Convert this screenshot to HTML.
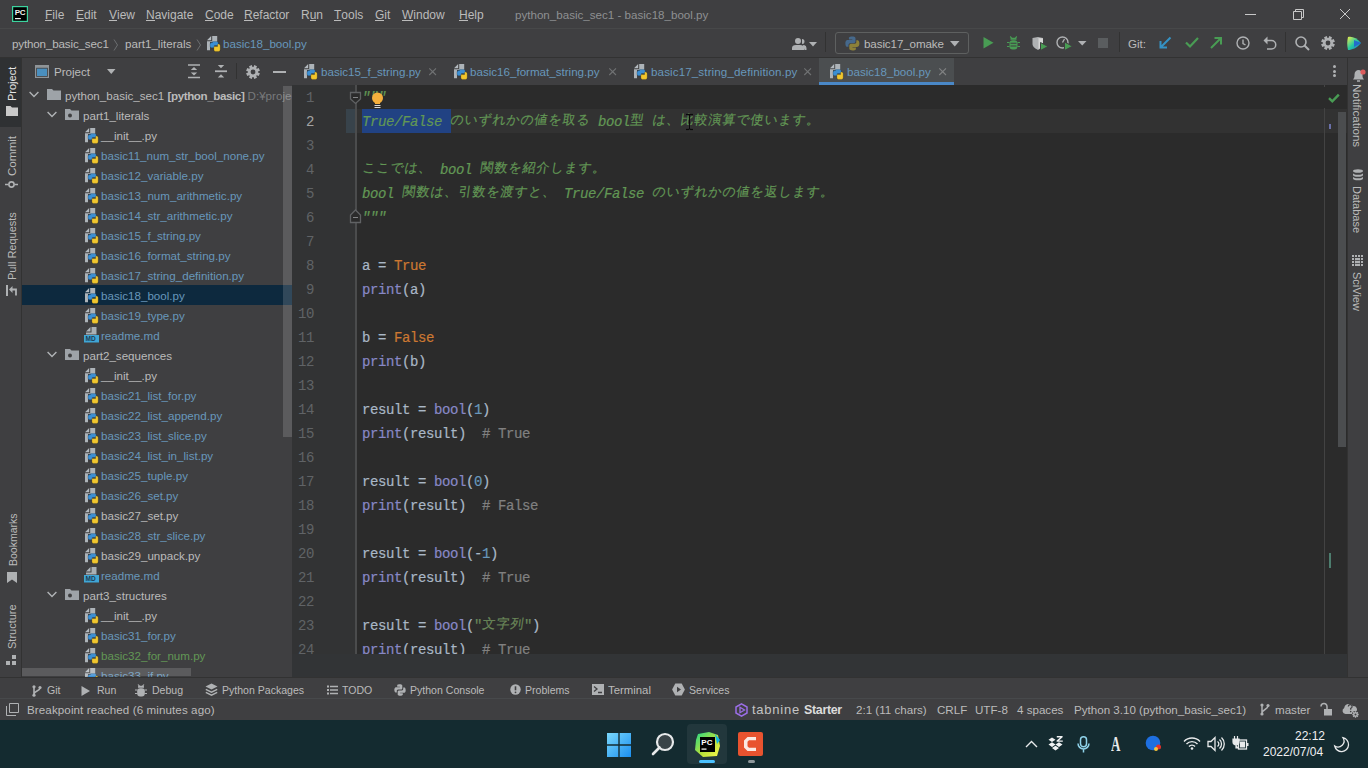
<!DOCTYPE html>
<html><head><meta charset="utf-8">
<style>
*{margin:0;padding:0;box-sizing:border-box}
html,body{width:1368px;height:768px;overflow:hidden;background:#3f3f41;font-family:"Liberation Sans",sans-serif;font-size:11.6px;color:#bbbbbb}
.a{position:absolute;white-space:nowrap}
svg{position:absolute;overflow:visible}
u{text-decoration:none;border-bottom:1px solid #bbbbbb;display:inline-block;line-height:10px}
#title{left:0;top:0;width:1368px;height:28px;background:#3f3f41}
#nav{left:0;top:28px;width:1368px;height:29px;background:#3f3f41}
#lstrip{left:0;top:57px;width:21px;height:620px;background:#3f3f41}
#proj{left:22px;top:57px;width:270px;height:620px;background:#3f3f41;overflow:hidden}
#tabs{left:292px;top:57px;width:1055px;height:28px;background:#3f3f41}
#editor{left:292px;top:85px;width:1055px;height:592px;background:#2b2b2b;overflow:hidden}
#rstrip{left:1347px;top:57px;width:21px;height:620px;background:#3f3f41}
#btool{left:0;top:677px;width:1368px;height:22px;background:#3f3f41}
#status{left:0;top:699px;width:1368px;height:21px;background:#3f3f41}
#taskbar{left:0;top:720px;width:1368px;height:48px;background:#142b30}
.vl{transform:rotate(-90deg);transform-origin:0 0;font-size:11px;line-height:14px;color:#bbbbbb}
.vt{transform:rotate(90deg);transform-origin:0 0;font-size:11px;line-height:14px}
.ln{position:absolute;left:0;width:22px;text-align:right;font-family:"Liberation Mono",monospace;font-size:14px;letter-spacing:-0.4px;line-height:24px;padding-top:1px}
.cl{position:absolute;left:70px;-webkit-text-stroke:0.2px;font-family:"Liberation Mono",monospace;font-size:14px;letter-spacing:-0.4px;line-height:24px;color:#a9b7c6;white-space:pre;padding-top:1px}
.doc{color:#629755;font-style:italic}
.jp{display:inline-block;white-space:nowrap;overflow:visible;font-size:13px;letter-spacing:1px;position:relative;top:-2px;font-style:normal;transform:skewX(-8deg)}
.menu span{position:absolute;top:8px;font-size:12px;line-height:14px;color:#bbbbbb}
.row{position:absolute;height:20px;line-height:20px;left:0;width:270px}
.row .t{position:absolute;top:1px}
.blue{color:#6897bb}.green{color:#629755}.wh{color:#bbbbbb}
.code{font-family:"Liberation Mono",monospace;font-size:13.33px;line-height:24px;color:#a9b7c6}
</style></head><body>
<svg width="0" height="0" style="position:absolute">
 <defs>
  <g id="py">
   <path d="M0 4.2 L4.2 0 V4.2 Z" fill="#b4bac0"/>
   <path d="M5.2 0 H10.2 V6 H3 V14.2 H0 V5.2 H5.2 Z" fill="#adb3b8"/>
   <path d="M5.5 5.6 H9.8 A1.6 1.6 0 0 1 11.4 7.2 V9.6 H7.4 V11.8 H4.6 A1.6 1.6 0 0 1 3 10.2 V8.2 A1.6 1.6 0 0 1 4.6 6.6 H5.5 Z" fill="#3b8fd4" stroke="rgba(0,0,0,0.3)" stroke-width="0.6"/>
   <path d="M8.6 15.4 H11.6 A1.6 1.6 0 0 0 13.2 13.8 V9.6 A1.6 1.6 0 0 0 11.6 8 H10.6 V10.6 H6.9 V13.8 A1.6 1.6 0 0 0 8.6 15.4 Z" fill="#f0c62e" stroke="rgba(0,0,0,0.3)" stroke-width="0.6"/>
  </g>
  <g id="md"><path d="M2 4.5 L6.5 0 L6.5 4.5 Z" fill="#aeb5ba"/><path d="M7.5 0 H12.5 V7.5 H2 V5.5 H7.5 Z" fill="#a9b0b5"/><rect x="0" y="8" width="15" height="7.5" fill="#40a6d6"/><text x="1.6" y="14.3" font-family="Liberation Sans" font-weight="bold" font-size="6.5" fill="#1d3d55">MD</text></g>
  <g id="fold"><path d="M0 1 h5 l1.5 1.5 h7.5 v9.5 h-14 z" fill="#9ea3a8"/></g>
  <g id="chev"><path d="M0.6 1 L5 5.4 L9.4 1" stroke="#b0b3b6" stroke-width="1.4" fill="none"/></g>
 </defs>
</svg>

<!-- TITLE BAR -->
<div class="a" id="title">
 <svg style="left:12px;top:6px" width="16" height="16"><rect x="0.6" y="0.6" width="14.8" height="14.8" fill="#000" stroke="#3dd39f" stroke-width="1.2"/><text x="2.8" y="9.2" font-family="Liberation Sans" font-weight="bold" font-size="8" fill="#f2f2f2" letter-spacing="-0.5">PC</text><rect x="3" y="12" width="5.8" height="1.2" fill="#f2f2f2"/></svg>
 <div class="menu">
  <span style="left:45px"><u>F</u>ile</span>
  <span style="left:76px"><u>E</u>dit</span>
  <span style="left:109px"><u>V</u>iew</span>
  <span style="left:146px"><u>N</u>avigate</span>
  <span style="left:205px"><u>C</u>ode</span>
  <span style="left:244px"><u>R</u>efactor</span>
  <span style="left:301px">R<u>u</u>n</span>
  <span style="left:334px"><u>T</u>ools</span>
  <span style="left:375px"><u>G</u>it</span>
  <span style="left:402px"><u>W</u>indow</span>
  <span style="left:459px"><u>H</u>elp</span>
  <span style="left:515px;color:#8e9092;font-size:11.6px">python_basic_sec1 - basic18_bool.py</span>
 </div>
 <div class="a" style="left:1245px;top:14px;width:11px;height:1px;background:#c8c8c8"></div>
 <svg style="left:1293px;top:9px" width="11" height="11"><path d="M0.5 2.5 h8 v8 h-8 z M2.5 2.5 v-2 h8 v8 h-2" stroke="#c8c8c8" fill="none" stroke-width="1"/></svg>
 <svg style="left:1340px;top:9px" width="11" height="11"><path d="M0 0 L10 10 M10 0 L0 10" stroke="#c8c8c8" fill="none" stroke-width="1"/></svg>
</div>
<!-- NAV BAR -->
<div class="a" id="nav">
 <div class="a" style="left:12px;top:9px;line-height:14px;letter-spacing:-0.15px">python_basic_sec1</div>
 <svg style="left:113px;top:11px" width="6" height="12"><path d="M1 0.5 L4.5 6 L1 11.5" stroke="#6b6e70" fill="none" stroke-width="1"/></svg>
 <div class="a" style="left:125px;top:9px;line-height:14px">part1_literals</div>
 <svg style="left:196px;top:11px" width="6" height="12"><path d="M1 0.5 L4.5 6 L1 11.5" stroke="#6b6e70" fill="none" stroke-width="1"/></svg>
 <svg style="left:207px;top:8px" width="14" height="16"><use href="#py"/></svg>
 <div class="a blue" style="left:223px;top:9px;line-height:14px">basic18_bool.py</div>
 <!-- person -->
 <svg style="left:792px;top:9px" width="26" height="14"><path d="M6 1 a3 3 0 1 1 0 6 a3 3 0 1 1 0 -6 z M0 13 v-2 a4 3 0 0 1 4 -3 h4 a4 3 0 0 1 4 3 v2 z M10 2 a2.5 2.5 0 0 1 0 5 M11 8 h1 a3 3 0 0 1 2.5 3 v2 h-2" fill="#afb1b3"/><path d="M17 5 h8 l-4 4.5 z" fill="#afb1b3"/></svg>
 <div class="a" style="left:825px;top:4px;width:1px;height:20px;background:#323232"></div>
 <div class="a" style="left:835px;top:4px;width:134px;height:22px;border:1px solid #5e6060;border-radius:3px"></div>
 <svg style="left:845px;top:8px" width="15" height="15"><path d="M7.2 0.5 c-3.5 0 -3.3 1.5 -3.3 1.5 v1.6 h3.4 v0.5 h-4.7 c0 0 -2.2 -0.2 -2.2 3.3 c0 3.5 1.9 3.4 1.9 3.4 h1.2 v-1.7 c0 0 -0.1 -1.9 1.9 -1.9 h3.3 c0 0 1.8 0 1.8 -1.8 v-3 c0 0 0.3 -1.9 -3.3 -1.9z" fill="#46698c"/><path d="M7.6 14.5 c3.5 0 3.3 -1.5 3.3 -1.5 v-1.6 h-3.4 v-0.5 h4.7 c0 0 2.2 0.2 2.2 -3.3 c0 -3.5 -1.9 -3.4 -1.9 -3.4 h-1.2 v1.7 c0 0 0.1 1.9 -1.9 1.9 h-3.3 c0 0 -1.8 0 -1.8 1.8 v3 c0 0 -0.3 1.9 3.3 1.9z" fill="#8c8139"/></svg>
 <div class="a" style="left:864px;top:9px;line-height:14px;letter-spacing:-0.1px">basic17_omake</div>
 <svg style="left:950px;top:13px" width="10" height="6"><path d="M0 0 h9.5 l-4.75 5.5 z" fill="#afb1b3"/></svg>
 <!-- run -->
 <svg style="left:983px;top:9px" width="11" height="12"><path d="M0.5 0 L10.5 5.75 L0.5 11.5 Z" fill="#499c54"/></svg>
 <svg style="left:1007px;top:8px" width="13" height="14"><path d="M3.2 0.5 L4.8 2.3 M9.8 0.5 L8.2 2.3" stroke="#499c54" stroke-width="1.2"/><path d="M4.5 1.8 h4 a1 1 0 0 1 1 1 v1 h-6 v-1 a1 1 0 0 1 1 -1z" fill="#499c54"/><rect x="2.5" y="4.2" width="8" height="9.3" rx="3.2" fill="#499c54"/><path d="M0 6.5 h2.5 M10.5 6.5 h2.5 M0 10.5 h2.5 M10.5 10.5 h2.5" stroke="#499c54" stroke-width="1.2"/><path d="M3.5 7.3 h6 M3.5 10 h6" stroke="#3f3f41" stroke-width="1.1"/></svg>
 <svg style="left:1032px;top:9px" width="17" height="14"><path d="M0.5 1 L6 0 L11 1 V7 C11 10 8 12 6 13 C4 12 0.5 10 0.5 7 Z" fill="#afb1b3"/><path d="M6 0 V13" stroke="#3f3f41" stroke-width="0"/><path d="M6.5 1 L11 1.5 V7 C11 9 9 11 6.5 12 Z" fill="#d6d6d6"/><path d="M8.5 5.5 L16 9.5 L8.5 13.5 Z" fill="#499c54" stroke="#3f3f41" stroke-width="1"/></svg>
 <svg style="left:1056px;top:8px" width="17" height="15"><circle cx="6.5" cy="6.5" r="5.5" stroke="#afb1b3" stroke-width="1.4" fill="none"/><path d="M6.5 6.5 L8.5 3" stroke="#afb1b3" stroke-width="1.3"/><path d="M8.5 6 L16.5 10.25 L8.5 14.5 Z" fill="#499c54" stroke="#3f3f41" stroke-width="1"/></svg>
 <svg style="left:1078px;top:13px" width="10" height="6"><path d="M0 0 h8.5 l-4.25 4.5 z" fill="#afb1b3"/></svg>
 <div class="a" style="left:1098px;top:10px;width:10px;height:10px;background:#5a5d5f"></div>
 <div class="a" style="left:1119px;top:4px;width:1px;height:20px;background:#323232"></div>
 <div class="a" style="left:1128px;top:9px;line-height:14px">Git:</div>
 <svg style="left:1159px;top:9px" width="13" height="12"><path d="M11.5 0.5 L2 10 M1.5 4 V10.5 H8" stroke="#3592c4" stroke-width="2" fill="none"/></svg>
 <svg style="left:1185px;top:9px" width="14" height="11"><path d="M1 5.5 L5 9.5 L13 1" stroke="#499c54" stroke-width="2.2" fill="none"/></svg>
 <svg style="left:1210px;top:9px" width="13" height="12"><path d="M1 11 L10.5 1.5 M4.5 1 H11 V7.5" stroke="#499c54" stroke-width="2" fill="none"/></svg>
 <svg style="left:1236px;top:8px" width="14" height="14"><circle cx="7" cy="7" r="6" stroke="#afb1b3" stroke-width="1.4" fill="none"/><path d="M7 3.5 V7.5 L9.5 9" stroke="#afb1b3" stroke-width="1.4" fill="none"/></svg>
 <svg style="left:1263px;top:8px" width="14" height="14"><path d="M2 4.5 H8.5 A4.2 4.2 0 0 1 8.5 13 H4" stroke="#afb1b3" stroke-width="1.5" fill="none"/><path d="M0.5 4.5 L4.5 0.5 V8.5 Z" fill="#afb1b3"/></svg>
 <div class="a" style="left:1285px;top:4px;width:1px;height:20px;background:#323232"></div>
 <svg style="left:1295px;top:8px" width="15" height="15"><circle cx="6" cy="6" r="5" stroke="#afb1b3" stroke-width="1.6" fill="none"/><path d="M9.5 9.5 L14 14" stroke="#afb1b3" stroke-width="2"/></svg>
 <svg style="left:1321px;top:8px" width="14" height="14"><path d="M11.97 7.50 L13.89 8.23 L12.74 11.00 L10.87 10.16 L10.16 10.87 L11.00 12.74 L8.23 13.89 L7.50 11.97 L6.50 11.97 L5.77 13.89 L3.00 12.74 L3.84 10.87 L3.13 10.16 L1.26 11.00 L0.11 8.23 L2.03 7.50 L2.03 6.50 L0.11 5.77 L1.26 3.00 L3.13 3.84 L3.84 3.13 L3.00 1.26 L5.77 0.11 L6.50 2.03 L7.50 2.03 L8.23 0.11 L11.00 1.26 L10.16 3.13 L10.87 3.84 L12.74 3.00 L13.89 5.77 L11.97 6.50 Z" fill="#afb1b3"/><circle cx="7" cy="7" r="2.4" fill="#3f3f41"/></svg>
 <svg style="left:1347px;top:8px" width="15" height="15"><defs><linearGradient id="lg" x1="0" y1="0" x2="1" y2="1"><stop offset="0" stop-color="#f2f04a"/><stop offset="0.5" stop-color="#27c9a0"/><stop offset="1" stop-color="#1a6bd6"/></linearGradient></defs><path d="M1 1 C5 0 10 2 14 7 C10 12 5 14 1 14 C0 10 0 5 1 1 Z" fill="url(#lg)"/><path d="M7 4 L14 7 L7 11 Z" fill="#2456d6" opacity="0.8"/></svg>
</div>

<div class="a" id="lstrip"></div>
<!-- PROJECT PANEL -->
<div class="a" id="proj">
 <svg style="left:13px;top:8px" width="14" height="13"><rect x="0.6" y="0.6" width="12.8" height="11.8" fill="none" stroke="#8f9498" stroke-width="1.2"/><rect x="0.6" y="0.6" width="12.8" height="2.2" fill="#8f9498"/><rect x="2" y="3.6" width="10" height="7.4" fill="#4a8fbf"/></svg>
 <div class="a" style="left:32px;top:8px;line-height:14px;font-size:11.6px">Project</div>
 <svg style="left:85px;top:12px" width="10" height="6"><path d="M0 0 h8.5 l-4.25 5 z" fill="#afb1b3"/></svg>
 <svg style="left:165px;top:7px" width="14" height="15"><path d="M1 1 h12 M1 13.5 h12" stroke="#afb1b3" stroke-width="1.5"/><path d="M7 3 L10.2 6 H3.8 Z M7 11.5 L10.2 8.5 H3.8 Z" fill="#afb1b3"/></svg>
 <svg style="left:192px;top:7px" width="14" height="15"><path d="M1 7.25 h12" stroke="#afb1b3" stroke-width="1.8"/><path d="M7 4.3 L10.2 1 H3.8 Z M7 10.2 L10.2 13.5 H3.8 Z" fill="#afb1b3"/></svg>
 <div class="a" style="left:214px;top:6px;width:1px;height:16px;background:#323232"></div>
 <svg style="left:224px;top:8px" width="14" height="14"><path d="M11.97 7.50 L13.89 8.23 L12.74 11.00 L10.87 10.16 L10.16 10.87 L11.00 12.74 L8.23 13.89 L7.50 11.97 L6.50 11.97 L5.77 13.89 L3.00 12.74 L3.84 10.87 L3.13 10.16 L1.26 11.00 L0.11 8.23 L2.03 7.50 L2.03 6.50 L0.11 5.77 L1.26 3.00 L3.13 3.84 L3.84 3.13 L3.00 1.26 L5.77 0.11 L6.50 2.03 L7.50 2.03 L8.23 0.11 L11.00 1.26 L10.16 3.13 L10.87 3.84 L12.74 3.00 L13.89 5.77 L11.97 6.50 Z" fill="#afb1b3"/><circle cx="7" cy="7" r="2.4" fill="#3f3f41"/></svg>
 <div class="a" style="left:251px;top:14px;width:13px;height:2px;background:#afb1b3"></div>
<div class="row" style="top:28px"><svg style="left:7px;top:5.5px" width="10" height="7"><use href="#chev"/></svg><svg style="left:25px;top:3px" width="15" height="14"><use href="#fold"/></svg><span class="t wh" style="left:43px">python_basic_sec1 <b style="letter-spacing:-0.4px;color:#bbbbbb">[python_basic]</b> <span style="color:#787a7c">D:¥projects\python_basic_sec1</span></span></div>
<div class="row" style="top:48px"><svg style="left:25px;top:5.5px" width="10" height="7"><use href="#chev"/></svg><svg style="left:43px;top:3px" width="15" height="14"><use href="#fold"/><circle cx="5" cy="7.5" r="2" fill="#3f3f41"/></svg><span class="t wh" style="left:61px">part1_literals</span></div>
<div class="row" style="top:68px"><svg style="left:63px;top:3px" width="14" height="16"><use href="#py"/></svg><span class="t wh" style="left:79px">__init__.py</span></div>
<div class="row" style="top:88px"><svg style="left:63px;top:3px" width="14" height="16"><use href="#py"/></svg><span class="t blue" style="left:79px">basic11_num_str_bool_none.py</span></div>
<div class="row" style="top:108px"><svg style="left:63px;top:3px" width="14" height="16"><use href="#py"/></svg><span class="t blue" style="left:79px">basic12_variable.py</span></div>
<div class="row" style="top:128px"><svg style="left:63px;top:3px" width="14" height="16"><use href="#py"/></svg><span class="t blue" style="left:79px">basic13_num_arithmetic.py</span></div>
<div class="row" style="top:148px"><svg style="left:63px;top:3px" width="14" height="16"><use href="#py"/></svg><span class="t blue" style="left:79px">basic14_str_arithmetic.py</span></div>
<div class="row" style="top:168px"><svg style="left:63px;top:3px" width="14" height="16"><use href="#py"/></svg><span class="t blue" style="left:79px">basic15_f_string.py</span></div>
<div class="row" style="top:188px"><svg style="left:63px;top:3px" width="14" height="16"><use href="#py"/></svg><span class="t blue" style="left:79px">basic16_format_string.py</span></div>
<div class="row" style="top:208px"><svg style="left:63px;top:3px" width="14" height="16"><use href="#py"/></svg><span class="t blue" style="left:79px">basic17_string_definition.py</span></div>
<div class="row" style="top:228px;background:#0d293e"><svg style="left:63px;top:3px" width="14" height="16"><use href="#py"/></svg><span class="t blue" style="left:79px">basic18_bool.py</span></div>
<div class="row" style="top:248px"><svg style="left:63px;top:3px" width="14" height="16"><use href="#py"/></svg><span class="t blue" style="left:79px">basic19_type.py</span></div>
<div class="row" style="top:268px"><svg style="left:62px;top:2px" width="15" height="16"><use href="#md"/></svg><span class="t blue" style="left:79px">readme.md</span></div>
<div class="row" style="top:288px"><svg style="left:25px;top:5.5px" width="10" height="7"><use href="#chev"/></svg><svg style="left:43px;top:3px" width="15" height="14"><use href="#fold"/><circle cx="5" cy="7.5" r="2" fill="#3f3f41"/></svg><span class="t wh" style="left:61px">part2_sequences</span></div>
<div class="row" style="top:308px"><svg style="left:63px;top:3px" width="14" height="16"><use href="#py"/></svg><span class="t wh" style="left:79px">__init__.py</span></div>
<div class="row" style="top:328px"><svg style="left:63px;top:3px" width="14" height="16"><use href="#py"/></svg><span class="t blue" style="left:79px">basic21_list_for.py</span></div>
<div class="row" style="top:348px"><svg style="left:63px;top:3px" width="14" height="16"><use href="#py"/></svg><span class="t blue" style="left:79px">basic22_list_append.py</span></div>
<div class="row" style="top:368px"><svg style="left:63px;top:3px" width="14" height="16"><use href="#py"/></svg><span class="t blue" style="left:79px">basic23_list_slice.py</span></div>
<div class="row" style="top:388px"><svg style="left:63px;top:3px" width="14" height="16"><use href="#py"/></svg><span class="t blue" style="left:79px">basic24_list_in_list.py</span></div>
<div class="row" style="top:408px"><svg style="left:63px;top:3px" width="14" height="16"><use href="#py"/></svg><span class="t blue" style="left:79px">basic25_tuple.py</span></div>
<div class="row" style="top:428px"><svg style="left:63px;top:3px" width="14" height="16"><use href="#py"/></svg><span class="t blue" style="left:79px">basic26_set.py</span></div>
<div class="row" style="top:448px"><svg style="left:63px;top:3px" width="14" height="16"><use href="#py"/></svg><span class="t wh" style="left:79px">basic27_set.py</span></div>
<div class="row" style="top:468px"><svg style="left:63px;top:3px" width="14" height="16"><use href="#py"/></svg><span class="t blue" style="left:79px">basic28_str_slice.py</span></div>
<div class="row" style="top:488px"><svg style="left:63px;top:3px" width="14" height="16"><use href="#py"/></svg><span class="t wh" style="left:79px">basic29_unpack.py</span></div>
<div class="row" style="top:508px"><svg style="left:62px;top:2px" width="15" height="16"><use href="#md"/></svg><span class="t blue" style="left:79px">readme.md</span></div>
<div class="row" style="top:528px"><svg style="left:25px;top:5.5px" width="10" height="7"><use href="#chev"/></svg><svg style="left:43px;top:3px" width="15" height="14"><use href="#fold"/><circle cx="5" cy="7.5" r="2" fill="#3f3f41"/></svg><span class="t wh" style="left:61px">part3_structures</span></div>
<div class="row" style="top:548px"><svg style="left:63px;top:3px" width="14" height="16"><use href="#py"/></svg><span class="t wh" style="left:79px">__init__.py</span></div>
<div class="row" style="top:568px"><svg style="left:63px;top:3px" width="14" height="16"><use href="#py"/></svg><span class="t blue" style="left:79px">basic31_for.py</span></div>
<div class="row" style="top:588px"><svg style="left:63px;top:3px" width="14" height="16"><use href="#py"/></svg><span class="t green" style="left:79px">basic32_for_num.py</span></div>
<div class="row" style="top:608px"><svg style="left:63px;top:3px" width="14" height="16"><use href="#py"/></svg><span class="t blue" style="left:79px">basic33_if.py</span></div>
 <div class="a" style="left:261px;top:29px;width:9px;height:351px;background:rgba(255,255,255,0.15)"></div>
 <div class="a" style="left:0;top:611px;width:169px;height:8px;background:rgba(255,255,255,0.15)"></div>
</div>
<!-- TABS -->
<div class="a" id="tabs">
 <svg style="left:12px;top:7px" width="14" height="16"><use href="#py"/></svg>
 <div class="a blue" style="left:29px;top:8px;line-height:14px">basic15_f_string.py</div>
 <svg style="left:137px;top:11px" width="8" height="8"><path d="M0.3 0.3 L7 7 M7 0.3 L0.3 7" stroke="#707273" stroke-width="1.1"/></svg>
 <svg style="left:162px;top:7px" width="14" height="16"><use href="#py"/></svg>
 <div class="a blue" style="left:178px;top:8px;line-height:14px">basic16_format_string.py</div>
 <svg style="left:317px;top:11px" width="8" height="8"><path d="M0.3 0.3 L7 7 M7 0.3 L0.3 7" stroke="#707273" stroke-width="1.1"/></svg>
 <svg style="left:342px;top:7px" width="14" height="16"><use href="#py"/></svg>
 <div class="a blue" style="left:359px;top:8px;line-height:14px;letter-spacing:0.12px">basic17_string_definition.py</div>
 <svg style="left:512px;top:11px" width="8" height="8"><path d="M0.3 0.3 L7 7 M7 0.3 L0.3 7" stroke="#707273" stroke-width="1.1"/></svg>
 <div class="a" style="left:527px;top:1px;width:135px;height:27px;background:#4b4e50"></div>
 <div class="a" style="left:527px;top:25px;width:135px;height:3px;background:#4a88c7"></div>
 <svg style="left:538px;top:7px" width="14" height="16"><use href="#py"/></svg>
 <div class="a blue" style="left:555px;top:8px;line-height:14px">basic18_bool.py</div>
 <svg style="left:647px;top:11px" width="8" height="8"><path d="M0.3 0.3 L7 7 M7 0.3 L0.3 7" stroke="#808283" stroke-width="1.1"/></svg>
 <div class="a" style="left:1041.3px;top:7.9px;width:3.1px;height:3.1px;border-radius:50%;background:#afb1b3"></div>
 <div class="a" style="left:1041.3px;top:12.5px;width:3.1px;height:3.1px;border-radius:50%;background:#afb1b3"></div>
 <div class="a" style="left:1041.3px;top:17.2px;width:3.1px;height:3.1px;border-radius:50%;background:#afb1b3"></div>
</div>
<!-- EDITOR -->
<div class="a" id="editor">
 <div class="a" style="left:0;top:0;width:63px;height:569px;background:#323334"></div>
 <div class="a" style="left:63px;top:0;width:2px;height:569px;background:#4b4c4d"></div>
 <div class="a" style="left:65px;top:24px;width:990px;height:24px;background:#323232"></div>
 <div class="a" style="left:54px;top:24px;width:9px;height:24px;background:#38434b"></div>
 <div class="a" style="left:70px;top:24px;width:89px;height:24px;background:#214283"></div>
 <div class="a" style="left:1032px;top:0;width:1px;height:2px;background:#454545"></div><div class="a" style="left:1032px;top:23px;width:1px;height:546px;background:#434343"></div>
<div class="ln" style="top:0px;color:#606366">1</div>
<div class="cl" style="top:0px"><span class="doc">"""</span></div>
<div class="ln" style="top:24px;color:#a4a3a3">2</div>
<div class="cl" style="top:24px"><span class="doc">True/False <span class="jp" style="width:140px">のいずれかの値を取る</span> bool<span class="jp" style="width:14px">型</span> <span class="jp" style="width:168px">は、比較演算で使います。</span></span></div>
<div class="ln" style="top:48px;color:#606366">3</div>
<div class="ln" style="top:72px;color:#606366">4</div>
<div class="cl" style="top:72px"><span class="doc"><span class="jp" style="width:70px">ここでは、</span> bool <span class="jp" style="width:126px">関数を紹介します。</span></span></div>
<div class="ln" style="top:96px;color:#606366">5</div>
<div class="cl" style="top:96px"><span class="doc">bool <span class="jp" style="width:154px">関数は、引数を渡すと、</span> True/False <span class="jp" style="width:182px">のいずれかの値を返します。</span></span></div>
<div class="ln" style="top:120px;color:#606366">6</div>
<div class="cl" style="top:120px"><span class="doc">"""</span></div>
<div class="ln" style="top:144px;color:#606366">7</div>
<div class="ln" style="top:168px;color:#606366">8</div>
<div class="cl" style="top:168px">a = <span style="color:#cc7832">True</span></div>
<div class="ln" style="top:192px;color:#606366">9</div>
<div class="cl" style="top:192px"><span style="color:#8888c6">print</span>(a)</div>
<div class="ln" style="top:216px;color:#606366">10</div>
<div class="ln" style="top:240px;color:#606366">11</div>
<div class="cl" style="top:240px">b = <span style="color:#cc7832">False</span></div>
<div class="ln" style="top:264px;color:#606366">12</div>
<div class="cl" style="top:264px"><span style="color:#8888c6">print</span>(b)</div>
<div class="ln" style="top:288px;color:#606366">13</div>
<div class="ln" style="top:312px;color:#606366">14</div>
<div class="cl" style="top:312px">result = <span style="color:#8888c6">bool</span>(<span style="color:#6897bb">1</span>)</div>
<div class="ln" style="top:336px;color:#606366">15</div>
<div class="cl" style="top:336px"><span style="color:#8888c6">print</span>(result)  <span style="color:#808080"># True</span></div>
<div class="ln" style="top:360px;color:#606366">16</div>
<div class="ln" style="top:384px;color:#606366">17</div>
<div class="cl" style="top:384px">result = <span style="color:#8888c6">bool</span>(<span style="color:#6897bb">0</span>)</div>
<div class="ln" style="top:408px;color:#606366">18</div>
<div class="cl" style="top:408px"><span style="color:#8888c6">print</span>(result)  <span style="color:#808080"># False</span></div>
<div class="ln" style="top:432px;color:#606366">19</div>
<div class="ln" style="top:456px;color:#606366">20</div>
<div class="cl" style="top:456px">result = <span style="color:#8888c6">bool</span>(-<span style="color:#6897bb">1</span>)</div>
<div class="ln" style="top:480px;color:#606366">21</div>
<div class="cl" style="top:480px"><span style="color:#8888c6">print</span>(result)  <span style="color:#808080"># True</span></div>
<div class="ln" style="top:504px;color:#606366">22</div>
<div class="ln" style="top:528px;color:#606366">23</div>
<div class="cl" style="top:528px">result = <span style="color:#8888c6">bool</span>(<span style="color:#6a8759">"<span class="jp" style="width:42px">文字列</span>"</span>)</div>
<div class="ln" style="top:552px;color:#606366">24</div>
<div class="cl" style="top:552px"><span style="color:#8888c6">print</span>(result)  <span style="color:#808080"># True</span></div>
<div class="ln" style="top:576px;color:#606366">25</div>
 <!-- fold markers -->
 <svg style="left:58px;top:7px" width="12" height="16"><path d="M0.5 0.5 H10.5 V7 L5.5 11.5 L0.5 7 Z" fill="#2b2b2b" stroke="#606264" stroke-width="1.3"/><path d="M3 5.5 H8" stroke="#9a9c9e" stroke-width="0.8"/></svg>
 <svg style="left:58px;top:122px" width="12" height="16"><path d="M0.5 15.5 H10.5 V8 L5.5 3 L0.5 8 Z" fill="#2b2b2b" stroke="#606264" stroke-width="1.3"/><path d="M3 10.5 H8" stroke="#9a9c9e" stroke-width="0.8"/></svg>
 <!-- bulb -->
 <svg style="left:79px;top:7px" width="13" height="18"><circle cx="6.5" cy="6" r="5.5" fill="#f4af3d"/><path d="M4 10 h5 v2 h-5z" fill="#f4af3d"/><path d="M3.5 13.5 h6 M3.5 15.5 h6" stroke="#d9d9d9" stroke-width="1"/></svg>
 <!-- I-beam cursor -->
 <svg style="left:393px;top:29px" width="9" height="16"><path d="M1 0.5 h2.5 l1 1 l1 -1 h2.5 M4.5 1.5 v13 M1 15.5 h2.5 l1 -1 l1 1 h2.5" stroke="#777" stroke-width="1.6" fill="none" opacity="0.5"/><path d="M1 0.5 h2.5 l1 1 l1 -1 h2.5 M4.5 1.5 v13 M1 15.5 h2.5 l1 -1 l1 1 h2.5" stroke="#0a0a0a" stroke-width="1.3" fill="none"/></svg>
 <!-- right markers / scrollbar -->
 <svg style="left:1036px;top:7.5px" width="12" height="10"><path d="M1 5.2 L4.3 8.3 L10.8 1.6" stroke="#499c54" stroke-width="2.4" fill="none"/></svg>
 <div class="a" style="left:1046px;top:27px;width:8px;height:335px;background:#4b4d4f"></div>
 <div class="a" style="left:1036.5px;top:39px;width:2.5px;height:5px;background:#6a70a8"></div>
 <div class="a" style="left:1037px;top:468px;width:2px;height:15px;background:#4d7d6e"></div>
 <!-- bottom band -->
 <div class="a" style="left:0;top:569px;width:1055px;height:23px;background:#323436"></div>
</div>
<!-- RIGHT STRIP -->
<div class="a" id="rstrip">
 <svg style="left:5px;top:12px" width="14" height="14"><path d="M1 10.5 C2.5 9 2.5 7.5 2.5 5.5 C2.5 2.5 4.5 1 6.5 1 C8.5 1 10.5 2.5 10.5 5.5 C10.5 7.5 10.5 9 12 10.5 Z" fill="#afb1b3"/><path d="M5 12 h3" stroke="#afb1b3" stroke-width="1.5"/><circle cx="11" cy="3" r="2.6" fill="#db5c5c"/></svg>
 <div class="a vt" style="left:17px;top:27px;color:#bbbbbb;font-size:11.6px">Notifications</div>
 <svg style="left:5px;top:112px" width="13" height="13"><ellipse cx="6" cy="2" rx="5" ry="1.8" fill="#afb1b3"/><path d="M1 4 v2 a5 1.8 0 0 0 10 0 v-2 a5 1.8 0 0 1 -10 0z M1 7.5 v2 a5 1.8 0 0 0 10 0 v-2 a5 1.8 0 0 1 -10 0z" fill="#afb1b3"/></svg>
 <div class="a vt" style="left:16.5px;top:129px;color:#bbbbbb">Database</div>
 <svg style="left:5px;top:198px" width="13" height="11"><path d="M0 0h2v2h-2zM3 0h2v2h-2zM6 0h2v2h-2zM9 0h2v2h-2zM0 3h2v2h-2zM0 6h2v2h-2zM0 9h2v2h-2zM9 3h2v2h-2zM9 6h2v2h-2zM9 9h2v2h-2zM3 3h5v8h-5z" fill="#afb1b3"/><path d="M3.2 5.5h4.6M3.2 8.5h4.6" stroke="#3f3f41" stroke-width="0.8"/></svg>
 <div class="a vt" style="left:16.5px;top:214.5px;color:#bbbbbb">SciView</div>
</div>

<!-- LEFT STRIP labels -->
<div class="a" style="left:0;top:57px;width:21px;height:70px;background:#2f3133"></div>
<div class="a" style="left:21px;top:57px;width:1px;height:620px;background:#323232"></div>
<div class="a vl" style="left:5.4px;top:100.5px;color:#e6e6e6">Project</div>
<svg style="left:6px;top:106px" width="12" height="10"><path d="M0 0 h4.5 l1.5 1.5 h6 v8.5 h-12 z" fill="#c9c9c9"/></svg>
<div class="a vl" style="left:5px;top:175.8px;font-size:11.6px">Commit</div>
<svg style="left:5px;top:180px" width="13" height="9"><circle cx="6.5" cy="4.5" r="2.6" fill="none" stroke="#afb1b3" stroke-width="1.6"/><path d="M0 4.5h3.5M9.5 4.5h3.5" stroke="#afb1b3" stroke-width="1.6"/></svg>
<div class="a vl" style="left:5.4px;top:280px">Pull Requests</div>
<svg style="left:6px;top:285px" width="11" height="11"><path d="M1 0 v11" stroke="#afb1b3" stroke-width="2"/><path d="M10 10.5 v-6 h-5" stroke="#afb1b3" stroke-width="1.8" fill="none"/><path d="M3 4.5 L6.5 1 V8 Z" fill="#afb1b3"/></svg>
<div class="a vl" style="left:5.6px;top:565.5px;font-size:10.5px">Bookmarks</div>
<svg style="left:7px;top:572px" width="10" height="11"><path d="M0 0 h10 v11 l-5 -3.5 l-5 3.5 z" fill="#afb1b3"/></svg>
<div class="a vl" style="left:5.4px;top:649px">Structure</div>
<svg style="left:6px;top:655px" width="12" height="10"><path d="M6 0h4v4h-4zM0 6h4v4h-4zM6 6h4v4h-4z" fill="#afb1b3"/></svg>
<!-- BOTTOM TOOL BAR -->
<div class="a" id="btool">
 <svg style="left:32px;top:8px" width="10" height="12"><circle cx="2" cy="1.8" r="1.6" fill="#afb1b3"/><circle cx="2" cy="10.2" r="1.6" fill="#afb1b3"/><circle cx="8" cy="2.5" r="1.6" fill="#afb1b3"/><path d="M2 2 v8 M8 3 C8 6 2 6 2 9" stroke="#afb1b3" stroke-width="1.6" fill="none"/></svg>
 <div class="a" style="left:47px;top:6px;line-height:14px;transform:scaleX(0.91);transform-origin:0 0">Git</div>
 <svg style="left:81px;top:9px" width="10" height="10"><path d="M0.5 0 L9 5 L0.5 10 Z" fill="#afb1b3"/></svg>
 <div class="a" style="left:97px;top:6px;line-height:14px;transform:scaleX(0.91);transform-origin:0 0">Run</div>
 <svg style="left:135px;top:7px" width="12" height="13"><path d="M3 0.5 L4.5 2.2 M9 0.5 L7.5 2.2" stroke="#afb1b3" stroke-width="1.1"/><path d="M4 1.8 h4 a1 1 0 0 1 1 1 v1 h-6 v-1 a1 1 0 0 1 1 -1z" fill="#afb1b3"/><rect x="2.2" y="4.2" width="7.6" height="8.3" rx="3" fill="#afb1b3"/><path d="M0 6 h2.5 M9.5 6 h2.5 M0 9.5 h2.5 M9.5 9.5 h2.5" stroke="#afb1b3" stroke-width="1.1"/></svg>
 <div class="a" style="left:152px;top:6px;line-height:14px;transform:scaleX(0.91);transform-origin:0 0">Debug</div>
 <svg style="left:205px;top:6px" width="13" height="14"><path d="M6.5 0.5 L12.5 3.5 L6.5 6.5 L0.5 3.5 Z" fill="#afb1b3"/><path d="M0.8 6.3 L6.5 9.2 L12.2 6.3 M0.8 9.3 L6.5 12.2 L12.2 9.3" stroke="#afb1b3" stroke-width="1.4" fill="none"/></svg>
 <div class="a" style="left:222px;top:6px;line-height:14px;transform:scaleX(0.91);transform-origin:0 0">Python Packages</div>
 <svg style="left:327px;top:8px" width="11" height="10"><path d="M0 0.5h2v2h-2zM0 4h2v2h-2zM0 7.5h2v2h-2z" fill="#afb1b3"/><path d="M3 1.5h8M3 5h8M3 8.5h8" stroke="#afb1b3" stroke-width="1.5"/></svg>
 <div class="a" style="left:342px;top:6px;line-height:14px;transform:scaleX(0.91);transform-origin:0 0">TODO</div>
 <svg style="left:394px;top:7px" width="12" height="12"><path d="M5.8 0.3 c-2.8 0 -2.6 1.2 -2.6 1.2 v1.3 h2.7 v0.4 h-3.8 c0 0 -1.8 -0.2 -1.8 2.6 c0 2.8 1.5 2.7 1.5 2.7 h1 v-1.4 c0 0 -0.1 -1.5 1.5 -1.5 h2.6 c0 0 1.4 0 1.4 -1.4 v-2.4 c0 0 0.2 -1.5 -2.5 -1.5z M6.2 11.7 c2.8 0 2.6 -1.2 2.6 -1.2 v-1.3 h-2.7 v-0.4 h3.8 c0 0 1.8 0.2 1.8 -2.6 c0 -2.8 -1.5 -2.7 -1.5 -2.7 h-1 v1.4 c0 0 0.1 1.5 -1.5 1.5 h-2.6 c0 0 -1.4 0 -1.4 1.4 v2.4 c0 0 -0.2 1.5 2.5 1.5z" fill="#afb1b3"/></svg>
 <div class="a" style="left:410px;top:6px;line-height:14px;transform:scaleX(0.91);transform-origin:0 0">Python Console</div>
 <svg style="left:510px;top:7px" width="11" height="11"><circle cx="5.5" cy="5.5" r="5.2" fill="#afb1b3"/><path d="M5.5 2.3 v4" stroke="#3f3f41" stroke-width="1.6"/><circle cx="5.5" cy="8.3" r="0.9" fill="#3f3f41"/></svg>
 <div class="a" style="left:525px;top:6px;line-height:14px;transform:scaleX(0.91);transform-origin:0 0">Problems</div>
 <svg style="left:592px;top:7px" width="12" height="11"><rect x="0" y="0" width="12" height="11" fill="#afb1b3"/><path d="M2 2.5 L5 5 L2 7.5 M6 8.5 h4" stroke="#3f3f41" stroke-width="1.3" fill="none"/></svg>
 <div class="a" style="left:608px;top:6px;line-height:14px;transform:scaleX(0.98);transform-origin:0 0">Terminal</div>
 <svg style="left:672px;top:6px" width="13" height="13"><path d="M3.3 0.5 h6.4 l3.2 6 l-3.2 6 h-6.4 l-3.2 -6 z" fill="#afb1b3"/><path d="M5 3.8 L9 6.5 L5 9.2 Z" fill="#3f3f41"/></svg>
 <div class="a" style="left:689px;top:6px;line-height:14px;transform:scaleX(0.91);transform-origin:0 0">Services</div>
</div>

<!-- STATUS BAR -->
<div class="a" id="status">
 <svg style="left:6px;top:4px" width="13" height="13"><path d="M3.5 0.5 h9 v9 h-9 z" fill="none" stroke="#afb1b3" stroke-width="1"/><path d="M0.5 3 v9.5 h9.5" fill="none" stroke="#afb1b3" stroke-width="1"/></svg>
 <div class="a" style="left:27px;top:4px;line-height:14px;letter-spacing:0.1px">Breakpoint reached (6 minutes ago)</div>
 <svg style="left:735px;top:4px" width="13" height="14"><path d="M6.5 0.8 L12 4 V10 L6.5 13.2 L1 10 V4 Z" fill="none" stroke="#9b6ee6" stroke-width="1.5"/><path d="M5 4.3 L9.5 7 L5 9.7 Z" fill="none" stroke="#9b6ee6" stroke-width="1.3"/></svg>
 <div class="a" style="left:752px;top:4px;line-height:14px;font-size:13px;color:#c4c4c4;letter-spacing:0.75px">tabnine</div>
 <div class="a" style="left:804px;top:4px;line-height:14px;font-size:12.4px;font-weight:bold;color:#dcdcdc;letter-spacing:-0.3px">Starter</div>
 <div class="a" style="left:856px;top:4px;line-height:14px">2:1 (11 chars)</div>
 <div class="a" style="left:937px;top:4px;line-height:14px">CRLF</div>
 <div class="a" style="left:975px;top:4px;line-height:14px">UTF-8</div>
 <div class="a" style="left:1017px;top:4px;line-height:14px">4 spaces</div>
 <div class="a" style="left:1074px;top:4px;line-height:14px">Python 3.10 (python_basic_sec1)</div>
 <svg style="left:1260px;top:4px" width="10" height="13"><circle cx="2" cy="2" r="1.6" fill="#afb1b3"/><circle cx="2" cy="11" r="1.6" fill="#afb1b3"/><circle cx="8" cy="2.5" r="1.6" fill="#afb1b3"/><path d="M2 2 v9 M8 3 C8 6.5 2 6.5 2 10" stroke="#afb1b3" stroke-width="1.5" fill="none"/></svg>
 <div class="a" style="left:1275px;top:4px;line-height:14px">master</div>
 <svg style="left:1320px;top:4px" width="12" height="13"><path d="M1 3.5 a3 3 0 0 1 6 0 v2.5" stroke="#afb1b3" stroke-width="1.5" fill="none"/><rect x="4" y="6" width="8" height="6.5" fill="#afb1b3"/></svg>
 <svg style="left:1342px;top:3px" width="18" height="17"><path d="M3.5 12 A3.2 3.2 0 0 1 2.2 6 A4.8 4.8 0 0 1 11 4.2 A3.4 3.4 0 0 1 14 10 L12 12 Z" fill="#afb1b3"/><path d="M6.3 4.6 a1.9 1.9 0 1 1 2.4 1.8 v1.4" stroke="#3f3f41" stroke-width="1.2" fill="none"/><circle cx="8.7" cy="9.6" r="0.8" fill="#3f3f41"/><circle cx="13.5" cy="12.5" r="3.6" fill="#3f3f41"/><path d="M13.5 9.3 v6.4 M10.3 12.5 h6.4 M11.2 10.2 l4.6 4.6 M15.8 10.2 l-4.6 4.6" stroke="#afb1b3" stroke-width="1.3"/><circle cx="13.5" cy="12.5" r="2.2" fill="#afb1b3"/><circle cx="13.5" cy="12.5" r="1" fill="#3f3f41"/></svg>
</div>

<!-- separators -->
<div class="a" style="left:0;top:28px;width:1368px;height:1px;background:#474849"></div>
<div class="a" style="left:0;top:57px;width:1368px;height:1px;background:#323232"></div>
<div class="a" style="left:292px;top:85px;width:1055px;height:0px;background:#323232"></div>
<div class="a" style="left:1347px;top:57px;width:1px;height:620px;background:#323232"></div>
<div class="a" style="left:0;top:677px;width:1368px;height:1px;background:#323232"></div>
<div class="a" style="left:0;top:698px;width:1368px;height:1px;background:#47494b"></div>
<!-- TASKBAR -->
<div class="a" id="taskbar">
 <svg style="left:607px;top:13px" width="24" height="24"><defs><linearGradient id="wg" x1="0" y1="0" x2="1" y2="1"><stop offset="0" stop-color="#7ad8fc"/><stop offset="1" stop-color="#1b8ff0"/></linearGradient></defs><path d="M0 0h11.3v11.3h-11.3zM12.7 0h11.3v11.3h-11.3zM0 12.7h11.3v11.3h-11.3zM12.7 12.7h11.3v11.3h-11.3z" fill="url(#wg)"/></svg>
 <svg style="left:651px;top:12px" width="24" height="24"><circle cx="14" cy="10" r="8" fill="#3a4448" stroke="#e8eaeb" stroke-width="2.2"/><path d="M8.5 15.5 L2 22" stroke="#e8eaeb" stroke-width="2.6" stroke-linecap="round"/></svg>
 <div class="a" style="left:687px;top:4px;width:40px;height:40px;border-radius:4px;background:#22373c"></div>
 <svg style="left:695px;top:12px" width="25" height="25"><defs><linearGradient id="pg" x1="0" y1="0" x2="1" y2="1"><stop offset="0" stop-color="#21d789"/><stop offset="0.55" stop-color="#b6e03a"/><stop offset="1" stop-color="#fcf84a"/></linearGradient></defs><path d="M3 2 L14 0 L23 3 L25 14 L22 24 L8 25 L0 18 L1 8 Z" fill="url(#pg)"/><path d="M20 2 L25 8 L22 12 Z" fill="#0fb5e6"/><rect x="5" y="5" width="15" height="15" fill="#000"/><text x="6.3" y="13" font-family="Liberation Sans" font-weight="bold" font-size="8" fill="#fff">PC</text><rect x="6.5" y="16.5" width="5" height="1.2" fill="#fff"/></svg>
 <div class="a" style="left:699px;top:40px;width:16px;height:3px;border-radius:2px;background:#4cc2ff"></div>
 <svg style="left:738px;top:12px" width="26" height="24"><rect x="0" y="0" width="25" height="24" rx="2" fill="#e8532f"/><path d="M18 5 H9.5 L6 8.5 V15.5 L9.5 19 H18 V15.8 H11 L9.5 14.3 V9.7 L11 8.2 H18 Z" fill="#fbe9e3"/></svg>
 <div class="a" style="left:748px;top:40px;width:7px;height:3px;border-radius:2px;background:#8e979b"></div>
 <!-- tray -->
 <svg style="left:1025px;top:20px" width="13" height="8"><path d="M1 7 L6.5 1.5 L12 7" stroke="#e8eaeb" stroke-width="1.4" fill="none"/></svg>
 <svg style="left:1047px;top:15px" width="18" height="16"><path d="M5 2.5 L8.5 4.8 L5 7.1 L1.5 4.8 Z M5 7.3 L8.5 9.6 L5 11.9 L1.5 9.6 Z M12 7.3 L15.5 9.6 L12 11.9 L8.5 9.6 Z M8.5 10.8 L12 13.1 L8.5 15.4 L5 13.1 Z" fill="#f0f2f3"/><path d="M9.8 1 H15.6 V2.3 L12 5.4 H15.8 V6.8 H9.6 V5.6 L13.2 2.4 H9.8 Z" fill="#f0f2f3"/><path d="M9 6.3 h7" stroke="#142b30" stroke-width="0"/></svg>
 <svg style="left:1077px;top:16px" width="13" height="17"><rect x="3.5" y="0.8" width="6" height="10" rx="3" fill="none" stroke="#8fd3ea" stroke-width="1.5"/><path d="M1 7.5 a5.5 5.5 0 0 0 11 0 M6.5 13 v3.5" stroke="#8fd3ea" stroke-width="1.5" fill="none"/></svg>
 <div class="a" style="left:1111px;top:14px;font-family:'Liberation Serif',serif;font-weight:bold;font-size:21px;line-height:20px;color:#e8eaeb;transform:scaleX(0.62);transform-origin:0 0">A</div>
 <svg style="left:1145px;top:16px" width="18" height="16"><circle cx="8" cy="7" r="7.3" fill="#1e6fe0"/><circle cx="13.5" cy="11" r="2.5" fill="#e4312b"/><circle cx="11" cy="13" r="2" fill="#f7c53a"/></svg>
 <svg style="left:1183px;top:17px" width="18" height="13"><path d="M1 4.5 a11 11 0 0 1 16 0 M3.5 7 a7.5 7.5 0 0 1 11 0 M6 9.5 a4 4 0 0 1 6 0" stroke="#e8eaeb" stroke-width="1.4" fill="none"/><circle cx="9" cy="11.5" r="1.3" fill="#e8eaeb"/></svg>
 <svg style="left:1207px;top:16px" width="18" height="16"><path d="M1 5.5 h3 l4 -4 v13 l-4 -4 h-3 z" fill="none" stroke="#e8eaeb" stroke-width="1.3"/><path d="M10.5 5.5 a3 3 0 0 1 0 5 M12.5 3.5 a6 6 0 0 1 0 9 M14.5 1.5 a9 9 0 0 1 0 13" stroke="#e8eaeb" stroke-width="1.3" fill="none"/></svg>
 <svg style="left:1232px;top:16px" width="17" height="15"><path d="M2.5 0 v3 M5.5 0 v3" stroke="#e8eaeb" stroke-width="1.2"/><path d="M1 3 h6 v3 a3 3 0 0 1 -6 0 z M4 9 v3 h3" fill="#e8eaeb" stroke="#e8eaeb" stroke-width="1.2"/><rect x="6.5" y="4" width="8" height="9" fill="none" stroke="#e8eaeb" stroke-width="1.3"/><rect x="8" y="5.5" width="5" height="6" fill="#e8eaeb"/><rect x="14.5" y="7" width="2" height="3" fill="#e8eaeb"/></svg>
 <div class="a" style="left:1295px;top:9px;font-size:12px;line-height:14px;color:#f0f0f0">22:12</div>
 <div class="a" style="left:1263px;top:25px;font-size:12px;line-height:14px;color:#f0f0f0">2022/07/04</div>
 <svg style="left:1334px;top:17px" width="15" height="15"><path transform="translate(15 0) scale(-1 1)" d="M6 0.7 A7 7 0 1 0 14.3 9 A6 6 0 0 1 6 0.7 Z" fill="none" stroke="#e8eaeb" stroke-width="1.3"/></svg>
</div>
</body></html>
